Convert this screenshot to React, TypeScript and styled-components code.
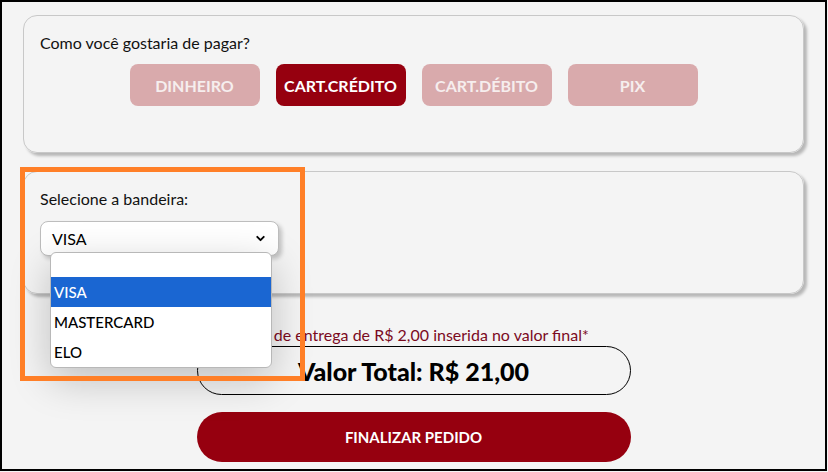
import styled, { createGlobalStyle } from "styled-components";
import { ChevronDown } from "lucide-react";

const GlobalStyle = createGlobalStyle`
  body {
    margin: 0;
    background: #f4f4f4;
    font-family: Lato, "Noto Sans", sans-serif;
  }
`;

const Frame = styled.div`
  position: relative;
  box-sizing: border-box;
  width: 827px;
  height: 471px;
  border: 2px solid #000;
  background: #f4f4f4;
  padding: 13px 21px 0 21px;
  display: flex;
  flex-direction: column;
  align-items: center;
  overflow: hidden;
`;

const Card = styled("section")<{ h: number; mt?: number }>`
  position: relative;
  box-sizing: border-box;
  width: 100%;
  height: ${(p) => p.h}px;
  margin-top: ${(p) => p.mt || 0}px;
  border: 1px solid #c8c8c8;
  border-radius: 14px;
  box-shadow: 3px 3px 3px rgba(0, 0, 0, 0.25);
  padding: 17px 16px;
`;

const Label = styled.p`
  margin: 0;
  font-size: 16px;
  line-height: 19px;
  color: #111;
`;

const MethodRow = styled.div`
  display: flex;
  justify-content: center;
  gap: 16px;
  margin-top: 12px;
`;

const MethodButton = styled("button")<{ active?: boolean }>`
  width: 130px;
  height: 42px;
  border: none;
  border-radius: 8px;
  font-family: inherit;
  font-size: 16px;
  font-weight: 700;
  text-transform: uppercase;
  color: ${(p) => (p.active ? "#fff" : "#f6eeee")};
  background: ${(p) => (p.active ? "#96000f" : "#d9aaac")};
  padding: 0;
`;

const SelectWrap = styled.div`
  position: relative;
  margin-top: 13px;
  width: 239px;
`;

const SelectBox = styled.div`
  box-sizing: border-box;
  height: 35px;
  display: flex;
  align-items: center;
  justify-content: space-between;
  padding: 0 11px;
  background: #fff;
  border: 1px solid #bdbdbd;
  border-radius: 8px;
  box-shadow: 3px 3px 4px rgba(0, 0, 0, 0.2);
  font-size: 16px;
  color: #000;
`;

const OptionList = styled.ul`
  position: absolute;
  z-index: 5;
  top: 31px;
  left: 10px;
  width: 220px;
  margin: 0;
  padding: 0;
  list-style: none;
  background: #fff;
  border: 1px solid #b8b8b8;
  border-radius: 6px;
  overflow: hidden;
  box-shadow: 0 12px 40px rgba(0, 0, 0, 0.22);
`;

const Option = styled("li")<{ selected?: boolean; blank?: boolean }>`
  height: ${(p) => (p.blank ? 24 : 30)}px;
  display: flex;
  align-items: center;
  padding-left: 3px;
  font-size: 15px;
  font-weight: 500;
  color: ${(p) => (p.selected ? "#fff" : "#000")};
  background: ${(p) => (p.selected ? "#1a66d2" : "transparent")};
`;

const Note = styled.p`
  margin: 31px 0 0;
  font-size: 16px;
  line-height: 19px;
  color: #7b0a1e;
  text-align: center;
`;

const TotalBox = styled.div`
  box-sizing: border-box;
  width: 434px;
  height: 49px;
  margin-top: 2px;
  border: 1px solid #000;
  border-radius: 25px;
  display: flex;
  align-items: center;
  justify-content: center;
  font-size: 25px;
  font-weight: 900;
  color: #000;
`;

const SubmitButton = styled.button`
  width: 434px;
  height: 50px;
  margin-top: 17px;
  border: none;
  border-radius: 25px;
  background: #96000f;
  color: #fff;
  font-family: inherit;
  font-size: 15px;
  font-weight: 700;
`;

const Highlight = styled.div`
  position: absolute;
  z-index: 10;
  left: 18px;
  top: 165px;
  width: 285px;
  height: 214px;
  box-sizing: border-box;
  border: 5px solid #ff7f27;
  pointer-events: none;
`;

const methods = ["Dinheiro", "Cart.Crédito", "Cart.Débito", "Pix"];
const brands = ["VISA", "MASTERCARD", "ELO"];

export default function App() {
  return (
    <>
      <GlobalStyle />
      <Frame>
        <Card h={138}>
          <Label>Como você gostaria de pagar?</Label>
          <MethodRow>
            {methods.map((m) => (
              <MethodButton key={m} active={m === "Cart.Crédito"}>
                {m}
              </MethodButton>
            ))}
          </MethodRow>
        </Card>
        <Card h={123} mt={18}>
          <Label>Selecione a bandeira:</Label>
          <SelectWrap>
            <SelectBox>
              <span>VISA</span>
              <ChevronDown size={13} strokeWidth={3.5} />
            </SelectBox>
            <OptionList>
              <Option blank />
              {brands.map((b) => (
                <Option key={b} selected={b === "VISA"}>
                  {b}
                </Option>
              ))}
            </OptionList>
          </SelectWrap>
        </Card>
        <Note>Taxa de entrega de R$ 2,00 inserida no valor final*</Note>
        <TotalBox>Valor Total: R$ 21,00</TotalBox>
        <SubmitButton>FINALIZAR PEDIDO</SubmitButton>
        <Highlight />
      </Frame>
    </>
  );
}
